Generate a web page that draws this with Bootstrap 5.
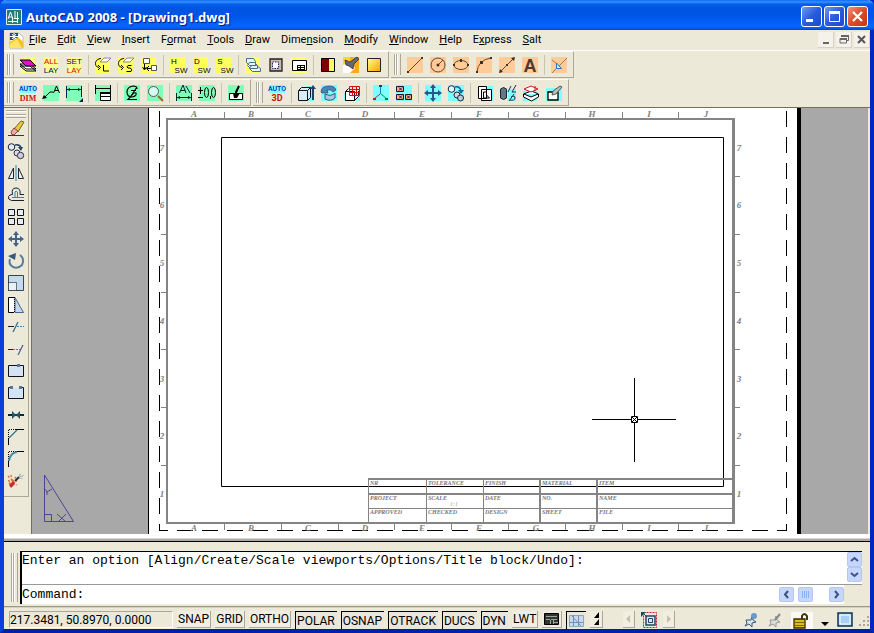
<!DOCTYPE html>
<html lang="en">
<head>
<meta charset="utf-8">
<meta name="viewport" content="width=device-width, initial-scale=1">
<title>AutoCAD 2008 - [Drawing1.dwg]</title>
<link href="https://cdn.jsdelivr.net/npm/bootstrap@5.3.0/dist/css/bootstrap.min.css" rel="stylesheet">
<style>
:root{--face:#ece9d8;--edge:#aca899;--blue:#0831d9}
body{font:11px/14px Roboto,"Liberation Sans",sans-serif;color:#000;background:#0040d8}
button{font:inherit;color:inherit;background:none;border:0;padding:0}
svg{display:block;overflow:visible}
.frame{background:var(--face);border:solid #0a3fdc;border-width:0 4px 4px;border-bottom-color:#0020a8;border-right-color:#0028c0}
.titlebar{height:30px;margin:0 -4px;padding:3px 6px 0 6px;background:linear-gradient(#0a6cf8 0,#3a93ff 2px,#0560ee 4px,#0053e1 9px,#0056e8 17px,#0366fc 25px,#0361f5 28px,#0041c8 30px);color:#fff;border-radius:6px 6px 0 0}
.titlebar h1{font:700 13px/18px "Noto Sans","Open Sans",sans-serif;text-shadow:1px 1px 1px #0a1883}
.wbtn{width:21px;height:21px;border:1px solid #fff;border-radius:3px;background:linear-gradient(135deg,#6e9af5,#2a5bdc 50%,#1c49cf)}
.wbtn.closer{background:linear-gradient(135deg,#f0937a,#e0492a 50%,#c83414)}
.winbtns{gap:2px}
.menubar{height:21px;padding-left:1px;border-bottom:1px solid #fff}
.menubar a{color:#000;text-decoration:none;padding:0 6px 0 5px;line-height:18px}
.mdi{width:16px;height:16px;background:#f4f2ea;border:solid #d8d4c4;border-width:0 1px 1px 0}
.bar-row{height:28px;gap:2px}
.tbar{height:27px;padding-right:3px;border:solid var(--edge);border-width:1px 1px 1px 0;border-top-color:#fff}
.grip{width:12px;padding-left:3px;align-self:stretch;margin:2px 0}
.grip::before{content:"";display:block;width:7px;height:100%;border:solid var(--edge);border-width:0 1px;box-shadow:inset 1px 0 #fff,inset -2px 0 var(--face),inset -3px 0 #fff,inset -4px 0 var(--edge)}
.tb{width:23px;height:24px;display:flex;align-items:center;justify-content:center}
.tb svg,.vb svg{width:18px;height:18px}
.tsep{width:6px;height:20px;display:flex;justify-content:center}
.tsep::before{content:"";width:1px;background:#c8c4b2}
.work{border-top:1px solid #716f64;min-height:0}
.side{width:25px;padding-top:1px;height:389px;border:solid var(--edge);border-width:0 1px 1px 0}
.vgrip{width:20px;height:8px;margin:1px 2px 0;border:solid var(--edge);border-width:1px 0;background:linear-gradient(#fff 1px,var(--face) 1px 3px,var(--edge) 3px 4px,#fff 4px 5px,var(--face) 5px)}
.vb{width:24px;height:22px;display:flex;align-items:center;justify-content:center}
.stage{background:#a8a8a8;margin:0 2px 0 2px;border-left:1px solid #716f64;min-width:0}
.stage svg{width:100%;height:100%;overflow:hidden}
.cmdwrap{border-top:1px solid #000;padding:9px 8px 2px 4px;margin-top:7px;position:relative}
.cmdwrap::before{content:"";display:block;position:absolute;left:0;right:0;top:-8px;height:7px;background:linear-gradient(#fff 0 4px,#dcd8c8 4px 5px,#aaa 5px)}
.cmdbox{border:solid #000;border-width:1px 0 0 2px;font:13px/16px "Liberation Mono",monospace}
.hist{background:#fff;height:33px;border-bottom:1px solid #999}
.hist p{padding-top:1px;margin:0}
.cmdline{background:#fff;height:19px;margin-right:18px;padding-top:2px}
.cmdline input{border:0;outline:0;padding:0 0 0 8px;background:none;min-width:0;font:inherit}
.sb{width:15px;height:15px;border:1px solid #b5c6f2;border-radius:2px;background:#c6d6fc;display:flex;align-items:center;justify-content:center}
.statusbar{border-top:1px solid #9a9788;box-shadow:inset 0 1px #d4d0c2;height:23px;padding:4px 1px 0 5px;font-size:12px;line-height:16px}
.coords{width:164px;height:17px;border:1px solid;border-color:#aca899 #fff #fff #aca899}
.tg{height:17px;padding:0 1px;white-space:nowrap;border:solid;border-width:0 1px 1px 0;border-color:#aca899;background:#f0eee1;text-align:center;line-height:16px}
.tg.on{height:18px;padding:0 2px 0 1px;border:solid #000;border-width:1px 0 0 1px;background:#e9e6da}
.lab{font:italic 700 9px "Liberation Serif",serif;fill:#808080;text-anchor:middle}
.fld{font:italic 700 6px "Liberation Serif",serif;fill:#777}
.bt{font:8px "Liberation Sans",sans-serif;text-anchor:middle}
</style>
</head>
<body>
<div class="frame d-flex flex-column vh-100">
<header class="titlebar d-flex align-items-center flex-shrink-0">
<svg width="16" height="16" viewBox="0 0 16 16"><path fill="#267c74" stroke="#d8f0ee" d="M.5.5h15v15H.5z"/><path fill="none" stroke="#fff" d="M2 10 4.500 3 7 10M3 8h3M9 2v8M8 9.500h5M2 12.500h9M11.500 3v11M6.500 9v5"/></svg>
<h1 class="mb-0 ms-1 flex-grow-1">AutoCAD 2008 - [Drawing1.dwg]</h1>
<div class="winbtns d-flex">
<button class="wbtn" aria-label="Minimize"><svg width="19" height="19"><path fill="#fff" d="M4 12h7v3H4z"/></svg></button>
<button class="wbtn" aria-label="Maximize"><svg width="19" height="19"><path fill="none" stroke="#fff" d="M4.500 5.500h10v9h-10z"/><path fill="#fff" d="M4 4h11v3H4z"/></svg></button>
<button class="wbtn closer" aria-label="Close"><svg width="19" height="19"><path stroke="#fff" stroke-width="2.200" d="M5 5l9 9M14 5l-9 9"/></svg></button>
</div>
</header>
<nav class="menubar d-flex align-items-center flex-shrink-0" aria-label="Main menu">
<svg class="ms-1" width="15" height="17" viewBox="0 0 15 17"><path fill="#fff" stroke="#888" stroke-width=".5" d="M1 1h9l4 4v11H1z"/><path fill="#18488c" d="M1 1h8v7H1z"/><path fill="#f4c020" d="M1 10 9 5l5 5v6H1z"/><path fill="#ffe468" d="M1 12l7-5 5 9H1z"/><path stroke="#fff" d="M5 1v7M1 4.500h8M3 2l4 5M7 2 3 7"/></svg>
<a href="#"><u>F</u>ile</a><a href="#"><u>E</u>dit</a><a href="#"><u>V</u>iew</a><a href="#"><u>I</u>nsert</a><a href="#">F<u>o</u>rmat</a><a href="#"><u>T</u>ools</a><a href="#"><u>D</u>raw</a><a href="#">Dime<u>n</u>sion</a><a href="#"><u>M</u>odify</a><a href="#"><u>W</u>indow</a><a href="#"><u>H</u>elp</a><a href="#">E<u>x</u>press</a><a href="#"><u>S</u>alt</a>
<div class="winbtns d-flex ms-auto">
<button class="mdi" aria-label="Minimize drawing"><svg width="15" height="15"><path fill="#666" d="M5 10h6v2H5z"/></svg></button>
<button class="mdi" aria-label="Restore drawing"><svg width="15" height="15"><path fill="none" stroke="#666" d="M6 5V3.500h6.500v5H11M4 6.500h6.500v4.500H4z"/><path fill="#666" d="M5 3h8v2H5zM4 6h7v2H4z"/></svg></button>
<button class="mdi" aria-label="Close drawing"><svg width="15" height="15"><path stroke="#555" stroke-width="2" d="M4 4l7 7M11 4l-7 7"/></svg></button>
</div>
</nav>

<div class="bar-row d-flex flex-shrink-0">
<div class="tbar d-flex align-items-center" role="toolbar" aria-label="Layers">
<span class="grip"></span>
<button class="tb" aria-label="Layer properties"><svg><path fill="#ffff80" d="M2 1h14v16H2z"/><path fill="#fff" stroke="#000" d="M1 10l6 5h10l-6-5zM1 8l6 5h10l-6-5z"/><path fill="#e010d0" stroke="#000" d="M1 4l6 6h10l-6-6z"/></svg></button>
<button class="tb" aria-label="All layers"><svg><path fill="#ffff90" d="M2 1h14v16H2z"/><text class="bt" x="9" y="8" fill="#d00">ALL</text><text class="bt" x="9" y="17" fill="#008">LAY</text></svg></button>
<button class="tb" aria-label="Set layer"><svg><path fill="#ffff90" d="M2 1h14v16H2z"/><text class="bt" x="9" y="8" fill="#008">SET</text><text class="bt" x="9" y="17" fill="#d00">LAY</text></svg></button>
<span class="tsep"></span>
<button class="tb" aria-label="Layer current"><svg><path fill="#ffff60" d="M1 1h15v16H1z"/><path fill="#fff" stroke="#888" d="M6 6l4-4h7l-4 4z"/><path fill="none" stroke="#000" d="M7 2.500C0 3 0 11 5 11.500M4 9l2.500 2.500L4 14M9.500 9v6H15"/></svg></button>
<button class="tb" aria-label="Layer select"><svg><path fill="#ffff60" d="M1 1h15v16H1z"/><path fill="#fff" stroke="#888" d="M6 6l4-4h7l-4 4z"/><path fill="none" stroke="#000" d="M7 2.500C0 3 0 11 5 11.500M4 9l2.500 2.500L4 14M14.500 9.500H11q-2 1.500 0 2.500h2q3 1 1 3.500H9.500"/></svg></button>
<button class="tb" aria-label="Move to layer"><svg><path fill="#ffff60" d="M1 1h15v16H1z"/><path fill="#fff" stroke="#555" d="M3.500 2.500h6v5h-6zM11.500 9.500h5v5h-5z"/><path fill="none" stroke="#000" d="M4.500 8v5M2.500 11l2 3 2-3M11 12.500H7M9 10l-2.500 2.500L9 15"/></svg></button>
<span class="tsep"></span>
<button class="tb" aria-label="H switch"><svg><path fill="#ffff60" d="M1 1h15v16H1z"/><text class="bt" x="5" y="8">H</text><text class="bt" x="12" y="17" fill="#004">SW</text></svg></button>
<button class="tb" aria-label="D switch"><svg><path fill="#ffff60" d="M1 1h15v16H1z"/><text class="bt" x="5" y="8">D</text><text class="bt" x="12" y="17" fill="#004">SW</text></svg></button>
<button class="tb" aria-label="S switch"><svg><path fill="#ffff60" d="M1 1h15v16H1z"/><text class="bt" x="5" y="8">S</text><text class="bt" x="12" y="17" fill="#004">SW</text></svg></button>
<span class="tsep"></span>
<button class="tb" aria-label="Sheets"><svg><path fill="#ffff70" d="M1 1h15v16H1z"/><path fill="#e8f4f8" stroke="#457080" d="M7.500 9.500h5l4 3v3h-8l-3-3zM5.500 6.500h5l3 3v3h-7l-3-3zM2.500 2.500h7l2 3v4h-6l-3-3z"/></svg></button>
<button class="tb" aria-label="Viewport"><svg><path fill="#c8b8a8" stroke="#222" stroke-width="1.300" d="M3 3h12v12H3z"/><path fill="#fff" stroke="#226" stroke-dasharray="1.500 1" d="M5.500 6h6v6.500h-6z"/></svg></button>
<button class="tb" aria-label="Title block"><svg><path fill="#ffff70" d="M1 1h16v16H1z"/><path fill="#fff" stroke="#000" d="M2.500 4.500h14v10h-14z"/><path d="M7 9h8v5H7z"/><path fill="#fff" d="M8 10h2v1H8zM11 10h3v1h-3zM8 12h2v1H8zM11 12h3v1h-3z"/></svg></button>
<span class="tsep"></span>
<button class="tb" aria-label="Color"><svg><path fill="#ffe" stroke="#000" d="M2.500 2.500h13v13h-13z"/><path fill="#800000" d="M3 3h7v12H3z"/><path fill="#ffff60" d="M10 3h5v12h-5z"/></svg></button>
<button class="tb" aria-label="Match"><svg><path fill="#ffd820" d="M1 1h11v16H1z"/><path fill="#ffa818" d="M8 1h9v16H8z"/><path fill="#fff" d="M1 9l8-3 4 6-5 5H1z"/><path fill="#667" stroke="#222" stroke-width=".7" d="M3 4l5 2 7-5 2 2-5 5-1 5-4-3-3-1z"/></svg></button>
<button class="tb" aria-label="Gradient"><svg><defs><linearGradient id="gr" x1="0" y1="0" x2="1" y2="1"><stop stop-color="#ff8"/><stop offset="1" stop-color="#ffa000"/></linearGradient></defs><path fill="url(#gr)" stroke="#222" d="M2.500 2.500h13v13h-13z"/></svg></button>
</div>
<div class="tbar d-flex align-items-center" role="toolbar" aria-label="Draw">
<span class="grip"></span>
<button class="tb" aria-label="Line"><svg><path fill="#ffcc99" d="M1 1h16v16H1z"/><path stroke="#604838" d="M2 16 16 2"/><path fill="#403020" d="M1 15h2v2H1zM15 1h2v2h-2z"/></svg></button>
<button class="tb" aria-label="Circle"><svg><path fill="#ffcc99" d="M1 1h16v16H1z"/><circle cx="9" cy="9" r="7" fill="none" stroke="#604838"/><path stroke="#604838" d="M9 9l5-5"/><circle cx="9" cy="9" r="1.500" fill="#403020"/></svg></button>
<button class="tb" aria-label="Ellipse"><svg><path fill="#ffcc99" d="M1 1h16v16H1z"/><ellipse cx="9" cy="9" rx="7" ry="4.500" fill="none" stroke="#604838"/><path fill="#403020" d="M1 8h2v2H1zM15 8h2v2h-2zM8 3h2v3H8z"/></svg></button>
<button class="tb" aria-label="Arc"><svg><path fill="#ffcc99" d="M1 1h16v16H1z"/><path fill="none" stroke="#604838" d="M2 16Q3 4 16 2"/><path fill="#403020" d="M1 15h2v2H1zM15 1h2v2h-2zM5 5h3v3H5z"/></svg></button>
<button class="tb" aria-label="Construction line"><svg><path fill="#ffcc99" d="M1 1h16v16H1z"/><path stroke="#604838" d="M2 16 16 2"/><path fill="#403020" d="M1 17l1-4 3 3zM17 1l-4 1 3 3zM8 8h2v2H8z"/></svg></button>
<button class="tb" aria-label="Text"><svg><path fill="#ffcc99" d="M1 1h16v16H1z"/><text x="9" y="16" text-anchor="middle" font-family="Liberation Sans, sans-serif" font-size="18" font-weight="700" fill="#50382c">A</text></svg></button>
<span class="tsep"></span>
<button class="tb" aria-label="Trim snap"><svg><path fill="#ffcc99" d="M1 1h16v16H1z"/><path stroke="#a07860" d="M2 17 17 2M2 4l5 4"/><path fill="#cfe8ff" stroke="#2874c8" d="M6.500 7v5.500h5z"/></svg></button>
</div>
</div>

<div class="bar-row d-flex flex-shrink-0">
<div class="tbar d-flex align-items-center" role="toolbar" aria-label="Dimension">
<span class="grip"></span>
<button class="tb" aria-label="Auto dimension"><svg><path fill="#80ffff" d="M1 1h16v8H1z"/><text x="9" y="7" text-anchor="middle" font-size="7" font-weight="500" fill="#0028b8">AUTO</text><text x="9" y="17" text-anchor="middle" font-family="Liberation Serif, serif" font-size="8" font-weight="700" fill="#c01808">DIM</text></svg></button>
<button class="tb" aria-label="Leader"><svg><path fill="#80ffb8" d="M1 1h16v16H1z"/><path stroke="#000" fill="none" d="M2 14l6-6h3M11.500 9l3-7 3 7M12.500 6.500h4"/><path d="M0 15l2-4 3 3z"/></svg></button>
<button class="tb" aria-label="Linear dimension"><svg><path fill="#80ffb8" d="M1 1h16v16H1z"/><path stroke="#024" d="M1.500 2v12M16.500 2v11M2 5.500h14"/><path fill="#024" d="M2 5.500 5 4v3zM16 5.500 13 4v3zM18 14v4h-4z"/></svg></button>
<span class="tsep"></span>
<button class="tb" aria-label="Dimension table"><svg><path fill="#80ffb8" d="M1 1h16v16H1z"/><path stroke="#000" d="M1.500 1v9M16.500 1v7M2 4.500h14"/><path fill="#fff" stroke="#000" d="M6.500 8.500h10v8h-10z"/><path d="M6 8h11v2H6zM6 12h11v1H6z"/></svg></button>
<span class="tsep"></span>
<button class="tb" aria-label="Centerline"><svg><path fill="#80ffb8" d="M1 1h16v16H1z"/><path fill="none" stroke="#000" stroke-width="1.200" d="M14 5q0-3-4-3Q4 3 4 8t5 5q5-1 4-4-2-1-4 2L5 15.500h9M14 3 8 12M8 6.500h5"/></svg></button>
<button class="tb" aria-label="Find"><svg><path fill="#80ffb8" d="M1 1h16v16H1z"/><path stroke="#a06828" stroke-width="2" d="M12 12l5 5"/><circle cx="7.500" cy="7.500" r="5" fill="#d8f8f0" stroke="#556"/></svg></button>
<span class="tsep"></span>
<button class="tb" aria-label="Text width"><svg><path fill="#80ffb8" d="M1 1h16v16H1z"/><path fill="none" stroke="#023" d="M4.500 9 8 1l3 8M6 6.500h4M11 2l4 7M1.500 9v8M16.500 9v8M2 13.500h14"/><path fill="#023" d="M2 13.500 5 12v3zM16 13.500 13 12v3z"/></svg></button>
<button class="tb" aria-label="Tolerance"><svg><path fill="#80ffb8" d="M1 1h16v16H1z"/><path fill="none" stroke="#000" d="M0 6.500h5M2.500 3v7M0 13.500h5"/><ellipse cx="8.500" cy="8.500" rx="2" ry="5" fill="none" stroke="#000"/><ellipse cx="15.500" cy="8.500" rx="2" ry="5" fill="none" stroke="#000"/><path stroke="#000" d="M12.500 12v3"/></svg></button>
<span class="tsep"></span>
<button class="tb" aria-label="Edit dimension"><svg><path fill="#80ffb8" d="M1 1h16v16H1z"/><path fill="#fff" stroke="#000" d="M2.500 9.500h13v6h-13z"/><path stroke="#000" stroke-width="2" d="M12 2 9 8v4"/><path d="M6 9h7l-3 5H7z"/></svg></button>
</div>
<div class="tbar d-flex align-items-center" role="toolbar" aria-label="3D">
<span class="grip"></span>
<button class="tb" aria-label="Auto 3D"><svg><path fill="#80ffff" d="M1 1h16v8H1z"/><text x="9" y="7" text-anchor="middle" font-size="7" font-weight="500" fill="#0028b8">AUTO</text><text x="9" y="17" text-anchor="middle" font-size="9" font-weight="700" fill="#c01808">3D</text></svg></button>
<span class="tsep"></span>
<button class="tb" aria-label="Extrude"><svg><path fill="#80ffff" d="M9 2h8v15H9z"/><path fill="#d8ecf4" stroke="#112" d="M1.500 6.500l3-3h9v10l-3 3h-9zM2 6.500h8.500v10M10.500 6.500l3-3"/><path stroke="#246" stroke-width="2" d="M16 16V4"/><path fill="#246" d="M13 5h6l-3-4z"/></svg></button>
<button class="tb" aria-label="Revolve"><svg><path fill="#80ffff" d="M1 1h16v16H1z"/><path fill="#4a84b8" stroke="#246" stroke-width=".7" d="M1 8Q1 2 9 2q6 0 7 4l-3 2Q11 5 7 6l1 3H2z"/><path fill="#a8c8e4" stroke="#357" d="M5 10q6 3 10-1v5q-4 4-10 1z"/></svg></button>
<button class="tb" aria-label="Section"><svg><path fill="#80ffff" d="M1 9h16v8H1z"/><path fill="#fff" stroke="#100" d="M2.500 7.500h9v9h-9zM2.500 7.500l3-3M11.500 16.500l4-4V7"/><path fill="none" stroke="#d01010" d="M6.500 2.500h10v9h-10zM6 5.500h10M6 8.500h10M9.500 2v9M13.500 2v9"/></svg></button>
<span class="tsep"></span>
<button class="tb" aria-label="UCS"><svg><path fill="#80ffff" d="M1 1h16v16H1z"/><path stroke="#18a" d="M8.500 10V2"/><path stroke="#a33" d="M8 10l-6 5"/><path stroke="#284" d="M9 10l6 5"/><path fill="#124090" d="M7 1h3v2H7z"/><path fill="#c02020" d="M1 14h3v2H1z"/><path fill="#108030" d="M13 14h3v2h-3z"/></svg></button>
<button class="tb" aria-label="Views"><svg><path fill="#80ffff" d="M1 1h16v16H1z"/><path fill="#ffb080" stroke="#213" d="M1.500 2.500h7v5h-7zM1.500 10.500h7v5h-7zM10.500 10.500h6v5h-6z"/><path stroke="#306" d="M4 3.500l3 3M7 3.500l-3 3M4 11.500l3 3M7 11.500l-3 3M12 11.500l3 3M15 11.500l-3 3"/></svg></button>
<span class="tsep"></span>
<button class="tb" aria-label="3D move"><svg><path fill="#80ffff" d="M1 1h16v16H1z"/><path stroke="#285888" stroke-width="2" d="M9 2v14M2 9h14"/><path fill="#285888" d="M9 0l3 4H6zM9 18l3-4H6zM0 9l4-3v6zM18 9l-4-3v6z"/></svg></button>
<button class="tb" aria-label="3D copy"><svg><path fill="#80ffff" d="M1 1h16v16H1z"/><circle cx="4.500" cy="5" r="3.300" fill="#dff" stroke="#223"/><circle cx="10" cy="11" r="3" fill="#cdd" stroke="#223"/><circle cx="13.500" cy="14" r="3" fill="#bcd" stroke="#223"/><path fill="none" stroke="#1860a0" stroke-width="1.500" d="M8 3q5-1 6 4"/><path fill="#1860a0" d="M11 6h6l-3 4z"/></svg></button>
<span class="tsep"></span>
<button class="tb" aria-label="Solid profile"><svg><path fill="#80ffff" d="M5 2h12v15H5z"/><path fill="#fff" stroke="#000" d="M2.500 2.500h8v12h-8zM5.500 5.500h10v11h-10z"/><path fill="none" stroke="#000" d="M7.500 8v6h6l-3-3V8z"/></svg></button>
<button class="tb" aria-label="Subtract"><svg><path fill="#80ffff" d="M9 5h8v12H9z"/><path fill="#607888" stroke="#223" d="M1.500 5q3-3 6 0v9q-3 3-6 0z"/><path fill="none" stroke="#234" d="M12 2 9 8M17 1l-4 7h4M10 17l5-7M12 13q4-2 4 1t-5 2"/></svg></button>
<button class="tb" aria-label="Slice"><svg><path fill="#80ffff" d="M1 7h14v10H1z"/><path fill="#fff" stroke="#000" d="M1.500 10l8-3 7 3v3l-7 4-8-4zM2 10l7 3 7-3"/><path fill="#fff" stroke="#c02020" d="M2 5l7-3 7 3-7 3zM13 2v5"/></svg></button>
<button class="tb" aria-label="Edit solid"><svg><path fill="#80ffff" d="M1 4h16v13H1z"/><path fill="#fff" stroke="#000" stroke-width="1.300" d="M3 8h10v8H3z"/><path fill="#b8c0b8" stroke="#555" d="M7 11l1-4 7-5 2 1-6 7z"/></svg></button>
</div>
</div>

<main class="work d-flex flex-grow-1">
<div class="side flex-shrink-0" role="toolbar" aria-label="Modify">
<div class="vgrip"></div>
<button class="vb" aria-label="Erase"><svg><path stroke="#622" d="M1 15.500h16"/><path fill="#f0c830" stroke="#664" d="M7 9l7-8 3 1-6 10z"/><path fill="#eaa" stroke="#844" d="M4 12l3-4 4 3-4 4q-3 0-3-3z"/></svg></button>
<button class="vb" aria-label="Copy"><svg><circle cx="4.500" cy="5" r="3.300" fill="#def" stroke="#223"/><circle cx="10" cy="11" r="3" fill="#dde" stroke="#334"/><circle cx="13.500" cy="13.500" r="3.200" fill="#ccd" stroke="#334"/><path fill="none" stroke="#246" stroke-width="1.500" d="M8 3q5-1 6 3"/><path fill="#246" d="M11 5h5l-2 4z"/></svg></button>
<button class="vb" aria-label="Mirror"><svg><path fill="#e8eef4" stroke="#223" d="M6.500 4v10.500h-5zM11.500 4v10.500h5z"/><path stroke="#28a" d="M9 1v16"/></svg></button>
<button class="vb" aria-label="Offset"><svg><path fill="none" stroke="#123" d="M17 14.500H4.500q-4-1-3-4 1-2 4-2Q4 2 9 2t4 6.500h4"/><path fill="none" stroke="#38a" d="M17 11.500H5M8 11V6q1-2 2.500 0v5"/></svg></button>
<button class="vb" aria-label="Array"><svg><path fill="#e4ecf4" stroke="#112" d="M1.500 1.500h6v6h-6zM10.500 1.500h6v6h-6zM1.500 10.500h6v6h-6zM10.500 10.500h6v6h-6z"/></svg></button>
<button class="vb" aria-label="Move"><svg><path stroke="#40648c" stroke-width="2" d="M9 2v14M2 9h14"/><path fill="#40648c" d="M9 1l3 4H6zM9 17l3-4H6zM1 9l4-3v6zM17 9l-4-3v6z"/></svg></button>
<button class="vb" aria-label="Rotate"><svg><path fill="none" stroke="#587c9c" stroke-width="2" d="M3 7q-2 5 3 8 5 2 9-2 3-6-2-10"/><path fill="#345878" d="M1 4l8-3-1 7z"/></svg></button>
<button class="vb" aria-label="Scale"><svg><path fill="#c4d8f0" stroke="#346" d="M1.500 1.500h15v15h-15z"/><path fill="#e8f0f8" stroke="#000" stroke-dasharray="1 1" d="M1.500 8.500h8v8h-8z"/></svg></button>
<button class="vb" aria-label="Stretch"><svg><path fill="#c4d8f0" stroke="#468" d="M8 1.500l8.500 15H8z"/><path fill="#fff" stroke="#000" d="M7 1.500H1.500v15H7"/><path stroke="#000" stroke-dasharray="1 1" d="M7.500 1v16"/></svg></button>
<button class="vb" aria-label="Trim"><svg><path stroke="#123" d="M1 8.500h6"/><path stroke="#38a" stroke-dasharray="2 1" d="M10 8.500h7"/><path stroke="#468" stroke-width="1.300" d="M6 14l5-10"/></svg></button>
<button class="vb" aria-label="Extend"><svg><path stroke="#123" d="M1 9.500h5"/><path stroke="#38a" stroke-dasharray="2 1" d="M6 9.500h7"/><path stroke="#468" stroke-width="1.300" d="M11 15l5-10"/></svg></button>
<button class="vb" aria-label="Break at point"><svg><path fill="#d4e4f4" stroke="#112" d="M1.500 3.500h15v11h-15z"/><path fill="#579" d="M10 2h3v3h-3z"/></svg></button>
<button class="vb" aria-label="Break"><svg><path fill="#d4e4f4" d="M2 4h14v10H2z"/><path fill="none" stroke="#112" d="M4 3.500H1.500v11h15v-11H14"/><path fill="#579" d="M3 2h3v3H3zM12 2h3v3h-3z"/></svg></button>
<button class="vb" aria-label="Join"><svg><path stroke="#123" stroke-width="2" d="M1 9h16"/><path fill="#256" d="M5 5l4 4-4 4zM13 5 9 9l4 4z"/></svg></button>
<button class="vb" aria-label="Chamfer"><svg><path fill="none" stroke="#000" stroke-dasharray="1 1" d="M1.500 9V1.500H9"/><path stroke="#000" d="M9 1.500h8M1.500 10v7"/><path stroke="#378" stroke-width="1.300" d="M2 10 10 2"/></svg></button>
<button class="vb" aria-label="Fillet"><svg><path fill="none" stroke="#000" stroke-dasharray="1 1" d="M1.500 9V1.500H9"/><path stroke="#000" d="M9 1.500h8M1.500 10v7"/><path fill="none" stroke="#48a" stroke-width="2" d="M2 11q1-8 8-9"/></svg></button>
<button class="vb" aria-label="Explode"><svg><path stroke="#e06830" stroke-width="1.500" stroke-dasharray="2 2" d="M1 4l9 9M2 12l7-7M4 3l2 12M1 9h9"/><path fill="#c03028" d="M2 13l4-4 2 3-4 4z"/><path stroke="#234" stroke-width="2" d="M8 9l4-4"/><path stroke="#999" stroke-dasharray="1 1" d="M12 4l3-3M13 5l4-2M13 2v5M15 4v4"/></svg></button>
</div>
<div class="stage flex-grow-1">
<svg viewBox="32 108 836 426" preserveAspectRatio="xMidYMid meet" role="img" aria-label="Drawing layout">
<path fill="#fff" d="M148 108h650v426H148z"/><path d="M148 108h1v426h-1zM797 108h4v426h-4z"/>
<g fill="none" stroke="#000">
<path stroke-dasharray="16 10 16 10 16 9 16 10 16 10" d="M159.500 111v419.500M786.500 111v419.500"/>
<path stroke-dasharray="16 9" d="M177 530.500h610"/><path d="M159 530.500h9"/>
<path d="M221.500 137.500h502v349h-502z"/>
</g>
<g fill="none" stroke="#848484">
<path stroke-width="2" d="M167 118v405M166 119h569M166 523h569"/>
<path stroke-width="3" d="M733.500 118v406"/>
<path stroke-width="2" d="M368 479h366M368 494h366M540 479v44M597 479v44"/>
<path d="M368 508.500h366M368.500 479v44M426.500 479v44M483.500 479v44"/>
<path d="M224.500 112v6M281.500 112v6M338.500 112v6M394.500 112v6M451.500 112v6M508.500 112v6M565.500 112v6M622.500 112v6M678.500 112v6M224.500 524v6M281.500 524v6M338.500 524v6M394.500 524v6M451.500 524v6M508.500 524v6M565.500 524v6M622.500 524v6M678.500 524v6M161 176.500h5M161 234.500h5M161 292.500h5M161 349.500h5M161 407.500h5M161 465.500h5M735 176.500h5M735 234.500h5M735 292.500h5M735 349.500h5M735 407.500h5M735 465.500h5"/>
</g>
<g class="lab">
<text x="194" y="117">A</text><text x="251" y="117">B</text><text x="308" y="117">C</text><text x="365" y="117">D</text><text x="422" y="117">E</text><text x="479" y="117">F</text><text x="536" y="117">G</text><text x="592" y="117">H</text><text x="649" y="117">I</text><text x="706" y="117">J</text>
<text x="194" y="531">A</text><text x="251" y="531">B</text><text x="308" y="531">C</text><text x="365" y="531">D</text><text x="422" y="531">E</text><text x="479" y="531">F</text><text x="536" y="531">G</text><text x="592" y="531">H</text><text x="649" y="531">I</text><text x="706" y="531">J</text>
<text x="162" y="151">7</text><text x="162" y="208">6</text><text x="162" y="266">5</text><text x="162" y="324">4</text><text x="162" y="382">3</text><text x="162" y="439">2</text><text x="162" y="497">1</text>
<text x="739" y="151">7</text><text x="739" y="208">6</text><text x="739" y="266">5</text><text x="739" y="324">4</text><text x="739" y="382">3</text><text x="739" y="439">2</text><text x="739" y="497">1</text>
</g>
<g class="fld">
<text x="370" y="485">NR</text><text x="428" y="485">TOLERANCE</text><text x="485" y="485">FINISH</text><text x="542" y="485">MATERIAL</text><text x="599" y="485">ITEM</text>
<text x="370" y="500">PROJECT</text><text x="428" y="500">SCALE</text><text x="485" y="500">DATE</text><text x="542" y="500">NO.</text><text x="599" y="500">NAME</text>
<text x="370" y="514">APPROVED</text><text x="428" y="514">CHECKED</text><text x="485" y="514">DESIGN</text><text x="542" y="514">SHEET</text><text x="599" y="514">FILE</text>
<text x="450" y="506" fill-opacity=".5">1:1</text>
</g>
<path fill="none" stroke="#000" d="M634.500 378v38M634.500 423v39M592 419.500h39M638 419.500h38M631.500 416.500h6v6h-6zM632 417l5 5M637 417l-5 5"/>
<path fill="none" stroke="#4c4494" d="M44.500 475v46.500h29zM44.500 514.500h7v7M44 488l3 4 5-3M47 492v3M57 514l9 8M66 514l-8 8"/>
</svg>
</div>
</main>

<section class="cmdwrap d-flex flex-shrink-0" aria-label="Command window">
<span class="grip"></span>
<div class="cmdbox flex-grow-1">
<div class="hist d-flex"><p class="flex-grow-1">Enter an option [Align/Create/Scale viewports/Options/Title block/Undo]:</p>
<div><button class="sb mb-0" aria-label="Scroll up"><svg width="9" height="9"><path fill="none" stroke="#3d5185" stroke-width="2" d="M1 6l3.500-3L8 6"/></svg></button><button class="sb" aria-label="Scroll down"><svg width="9" height="9"><path fill="none" stroke="#3d5185" stroke-width="2" d="M1 3l3.500 3L8 3"/></svg></button></div></div>
<div class="cmdline d-flex"><label for="cmd">Command:</label><input id="cmd" class="flex-grow-1" type="text">
<button class="sb" aria-label="Scroll left"><svg width="9" height="9"><path fill="none" stroke="#3d5185" stroke-width="2" d="M6 1 3 4.500 6 8"/></svg></button>
<button class="sb ms-1" aria-label="Scroll thumb"><svg width="9" height="9"><path stroke="#8cb0f8" d="M1.500 1v7M3.500 1v7M5.500 1v7M7.500 1v7"/></svg></button>
<button class="sb ms-3" aria-label="Scroll right"><svg width="9" height="9"><path fill="none" stroke="#3d5185" stroke-width="2" d="M3 1l3 3.500L3 8"/></svg></button></div>
</div>
</section>

<footer class="statusbar d-flex flex-shrink-0 gap-1">
<div class="coords flex-shrink-0">217.3481, 50.8970, 0.0000</div>
<button class="tg">SNAP</button><button class="tg">GRID</button><button class="tg">ORTHO</button><button class="tg on">POLAR</button><button class="tg on">OSNAP</button><button class="tg on">OTRACK</button><button class="tg on">DUCS</button><button class="tg on">DYN</button><button class="tg">LWT</button>
<button class="tg" aria-label="Model"><svg width="17" height="16"><path fill="#333" stroke="#000" d="M1.500 2.500h14v11h-14z"/><path stroke="#9a9" d="M3 5.500h11M8 8.500h6M3 8.500h4M7.500 9v4M10.500 9v4M11 11.500h4"/></svg></button>
<button class="tg on" aria-label="Layout"><svg width="16" height="16"><path fill="#c8d8ee" stroke="#8ab" d="M1.500 2.500h14v11h-14z"/><path stroke="#7090b8" d="M5.500 2v11M10.500 2v11M1 9.500h14M4 3l9 10"/></svg></button>
<button class="tg" aria-label="Switch"><svg width="10" height="16"><path d="M8 1v6H3zM8 8v6H3z"/></svg></button>
<button class="tg ms-3" aria-label="Previous viewport"><svg width="9" height="16"><path fill="#c4c0b0" d="M6 4v8L2 8z"/></svg></button>
<button aria-label="Maximize viewport"><svg width="20" height="18"><path fill="none" stroke="#c02040" stroke-dasharray="2 1" d="M4.500 1.500h13v15h-13z"/><path fill="#d8e8f4" stroke="#246" stroke-width="1.500" d="M7 5h9v9H7z"/><path fill="none" stroke="#246" d="M9.500 7.500h4v4h-4zM3 1l5 5"/><path fill="#246" d="M2 1h5L2 6z"/></svg></button>
<button class="tg" aria-label="Next viewport"><svg width="9" height="16"><path fill="#c4c0b0" d="M3 4v8l4-4z"/></svg></button>
<div class="d-flex ms-auto gap-2">
<button aria-label="Annotation visibility"><svg width="16" height="16"><path fill="#d8e4f0" stroke="#357" d="M3 8h5l1-4 1 4 3 2-4 1v4l-3-3-4 2 2-3z"/><circle cx="11" cy="4" r="3" fill="#69c"/></svg></button>
<button aria-label="Annotation scale"><svg width="16" height="16"><path fill="#ddd" stroke="#999" d="M3 8h5l1-4 1 4 3 2-4 1v4l-3-3-4 2 2-3z"/><path stroke="#888" stroke-width="2" d="M8 8l5-6"/></svg></button>
<button aria-label="Unlock"><svg width="22" height="17"><path fill="#faf9f4" d="M0 0h22v17H0z"/><path fill="none" stroke="#443800" stroke-width="2" d="M11 8V4q2-4 5 0v4"/><path fill="#d8c020" stroke="#332800" stroke-width="1.300" d="M3 7h11v9H3z"/><path stroke="#786400" d="M3 10.500h11M3 13.500h11"/></svg></button>
<button aria-label="Status menu"><svg width="8" height="16"><path d="M0 10h8l-4 4z"/></svg></button>
<button aria-label="Clean screen"><svg width="16" height="16"><path fill="#a8d0f4" stroke="#135" stroke-width="1.500" d="M1 1h14v13H1z"/><path fill="none" stroke="#fff" d="M3 3h10v9H3z"/></svg></button>
<svg width="8" height="17"><path fill="#aca899" d="M6 5h2v2H6zM6 9h2v2H6zM2 9h2v2H2zM6 13h2v2H6zM2 13h2v2H2zM-2 13h2v2H-2z"/></svg>
</div>
</footer>
</div>
<script src="https://cdn.jsdelivr.net/npm/bootstrap@5.3.0/dist/js/bootstrap.bundle.min.js"></script>
</body>
</html>
